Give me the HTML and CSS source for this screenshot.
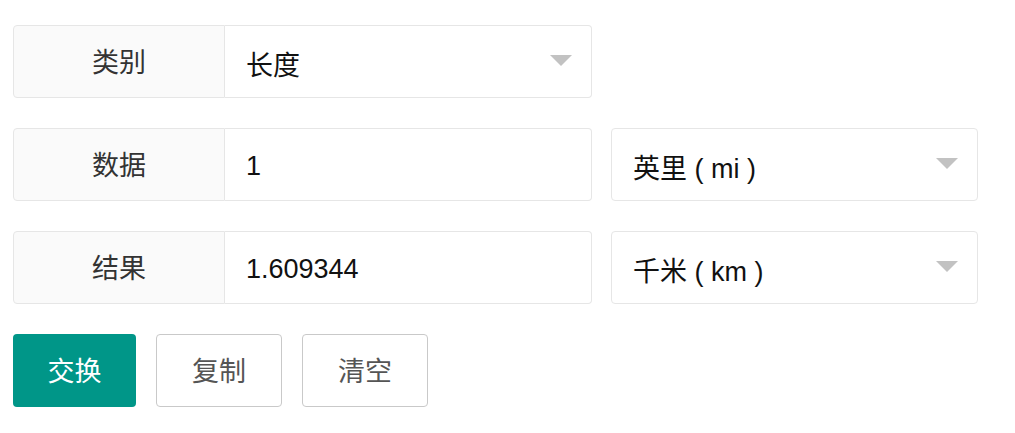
FILE: index.html
```html
<!DOCTYPE html>
<html lang="zh-CN">
<head>
    <meta charset="UTF-8">
    <meta name="viewport" content="width=device-width, initial-scale=1.0">
    <title>单位换算</title>
    <link rel="stylesheet" href="styles.css">
</head>
<body>
    <form class="converter">
        <div class="form-item">
            <label class="form-label">类别</label>
            <div class="select field">
                <span>长度</span>
                <i class="edge"></i>
            </div>
        </div>
        <div class="form-item">
            <label class="form-label" for="value-in">数据</label>
            <input class="input field" id="value-in" type="text" value="1">
            <div class="select unit">
                <span>英里 ( mi )</span>
                <i class="edge"></i>
            </div>
        </div>
        <div class="form-item">
            <label class="form-label" for="value-out">结果</label>
            <input class="input field" id="value-out" type="text" value="1.609344" readonly>
            <div class="select unit">
                <span>千米 ( km )</span>
                <i class="edge"></i>
            </div>
        </div>
        <div class="buttons">
            <button type="button" class="btn btn-normal">交换</button>
            <button type="button" class="btn btn-primary">复制</button>
            <button type="button" class="btn btn-primary">清空</button>
        </div>
    </form>
</body>
</html>
```

FILE: styles.css
```css
body {
    margin: 0;
    padding: 25px 0 0 13px;
    font-family: "Liberation Sans", "Noto Sans CJK SC", sans-serif;
    font-size: 27px;
    color: #333;
    background-color: #fff;
}
.converter {
    display: flex;
    flex-direction: column;
    gap: 30px;
}
.form-item {
    display: flex;
    height: 73px;
}
.form-label {
    box-sizing: border-box;
    width: 212px;
    height: 100%;
    display: flex;
    align-items: center;
    justify-content: center;
    padding-bottom: 3px;
    background-color: #fafafa;
    border: 1px solid #e6e6e6;
    border-radius: 4px 0 0 4px;
}
.field {
    box-sizing: border-box;
    width: 367px;
    height: 100%;
    border: 1px solid #e6e6e6;
    border-left: none;
    border-radius: 0 4px 4px 0;
}
.input {
    margin: 0;
    padding: 3px 0 0 21px;
    font: inherit;
    color: #111;
    background: #fff;
    outline: none;
}
.select {
    display: flex;
    align-items: center;
    justify-content: space-between;
    padding: 3px 19px 0 21px;
    color: #111;
    background: #fff;
}
.unit {
    box-sizing: border-box;
    width: 367px;
    margin-left: 19px;
    border: 1px solid #e6e6e6;
    border-radius: 4px;
}
.edge {
    width: 0;
    height: 0;
    margin-top: -6px;
    border-style: solid;
    border-width: 11px 11px 0 11px;
    border-color: #c2c2c2 transparent transparent transparent;
}
.buttons {
    display: flex;
    gap: 20px;
}
.btn {
    box-sizing: border-box;
    height: 73px;
    padding: 0 0 2px;
    font: inherit;
    white-space: nowrap;
    text-align: center;
    border-radius: 4px;
    cursor: pointer;
}
.btn-normal {
    width: 123px;
    color: #fff;
    background-color: #009688;
    border: none;
}
.btn-primary {
    width: 126px;
    color: #555;
    background-color: #fff;
    border: 1px solid #c9c9c9;
}
```
